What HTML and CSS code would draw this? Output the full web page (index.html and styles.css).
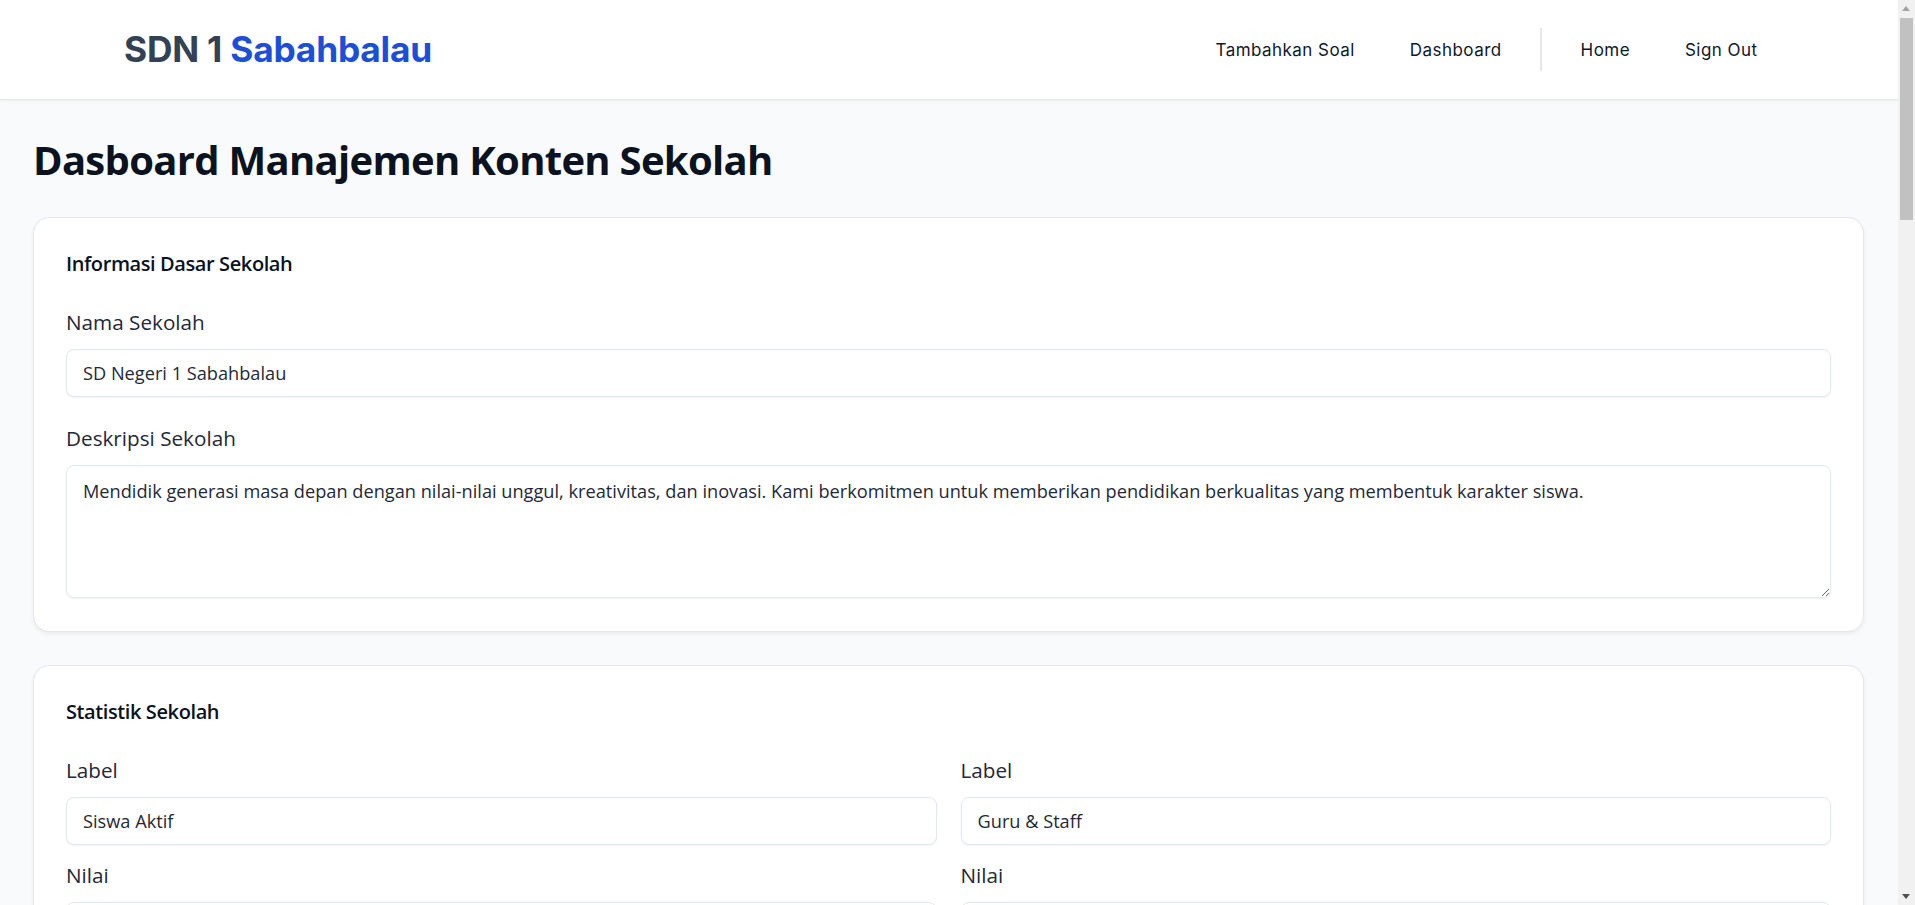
FILE: index.html
```html
<!DOCTYPE html>
<html lang="id">
<head>
<meta charset="utf-8">
<title>SDN 1 Sabahbalau - Dashboard</title>
<link rel="stylesheet" href="styles.css">
</head>
<body>
<header class="topbar">
  <div class="topbar-inner">
    <a class="brand" href="#"><span class="brand-dark">SDN 1</span> <span class="brand-blue">Sabahbalau</span></a>
    <nav class="nav">
      <a class="nav-link" href="#">Tambahkan Soal</a>
      <a class="nav-link" href="#">Dashboard</a>
      <span class="nav-divider"></span>
      <a class="nav-link" href="#">Home</a>
      <a class="nav-link" href="#">Sign Out</a>
    </nav>
  </div>
</header>

<main class="page">
  <h1 class="page-title">Dasboard Manajemen Konten Sekolah</h1>

  <section class="card">
    <h2 class="card-title">Informasi Dasar Sekolah</h2>
    <div class="field">
      <label class="field-label" for="nama">Nama Sekolah</label>
      <input class="input" id="nama" type="text" value="SD Negeri 1 Sabahbalau">
    </div>
    <div class="field">
      <label class="field-label" for="deskripsi">Deskripsi Sekolah</label>
      <textarea class="input textarea" id="deskripsi">Mendidik generasi masa depan dengan nilai-nilai unggul, kreativitas, dan inovasi. Kami berkomitmen untuk memberikan pendidikan berkualitas yang membentuk karakter siswa.</textarea>
    </div>
  </section>

  <section class="card">
    <h2 class="card-title">Statistik Sekolah</h2>
    <div class="stat-grid">
      <div class="stat-item">
        <label class="field-label">Label</label>
        <input class="input" type="text" value="Siswa Aktif">
        <label class="field-label">Nilai</label>
        <input class="input" type="text" value="500+">
      </div>
      <div class="stat-item">
        <label class="field-label">Label</label>
        <input class="input" type="text" value="Guru &amp; Staff">
        <label class="field-label">Nilai</label>
        <input class="input" type="text" value="35+">
      </div>
      <div class="stat-item">
        <label class="field-label">Label</label>
        <input class="input" type="text" value="Prestasi">
        <label class="field-label">Nilai</label>
        <input class="input" type="text" value="50+">
      </div>
      <div class="stat-item">
        <label class="field-label">Label</label>
        <input class="input" type="text" value="Ekstrakurikuler">
        <label class="field-label">Nilai</label>
        <input class="input" type="text" value="12">
      </div>
    </div>
  </section>
</main>

<div class="scrollbar" aria-hidden="true">
  <span class="scroll-arrow scroll-up"></span>
  <span class="scroll-thumb"></span>
  <span class="scroll-arrow scroll-down"></span>
</div>
</body>
</html>
```

FILE: styles.css
```css
* {
  box-sizing: border-box;
}

html, body {
  margin: 0;
  padding: 0;
}

body {
  background: #f8fafc;
  color: #1f2937;
  font-family: "Segoe UI", "Open Sans", "Noto Sans", sans-serif;
  padding-right: 17px;
}

/* ---------- header ---------- */
.topbar {
  background: #ffffff;
  border-bottom: 1px solid #e5e7eb;
  box-shadow: 0 1px 3px rgba(15, 23, 42, 0.06);
}

.topbar-inner {
  height: 99px;
  display: flex;
  align-items: center;
  justify-content: space-between;
  padding: 0 113px 0 124px;
}

.brand {
  text-decoration: none;
  font-family: "Inter", "Noto Sans", sans-serif;
  font-weight: 700;
  font-size: 35.3px;
  letter-spacing: -0.2px;
  line-height: 1;
}

.brand-dark {
  color: #334155;
}

.brand-blue {
  color: #1d4ed8;
}

.nav {
  display: flex;
  align-items: center;
}

.nav-link {
  font-family: "Inter", "Noto Sans", sans-serif;
  font-size: 17px;
  letter-spacing: 0.45px;
  color: #0f172a;
  text-decoration: none;
  padding: 8px 27.5px;
}

.nav-divider {
  width: 2px;
  height: 43px;
  background: #e5e7eb;
  margin: 0 11px;
}

/* ---------- page ---------- */
.page {
  padding: 36px 34px 40px 33px;
}

.page-title {
  margin: 0 0 33px;
  font-size: 40px;
  line-height: 48px;
  font-weight: 700;
  letter-spacing: -0.7px;
  color: #0b1220;
}

.card {
  background: #ffffff;
  border: 1px solid #e5e7eb;
  border-radius: 16px;
  box-shadow: 0 2px 4px rgba(15, 23, 42, 0.06);
  padding: 32px 32px 33px;
  margin-bottom: 33px;
}

.card-title {
  margin: 0 0 30px;
  font-size: 20px;
  line-height: 28px;
  font-weight: 600;
  letter-spacing: -0.4px;
  color: #0b1220;
}

.field {
  margin-bottom: 27px;
}

.field:last-child {
  margin-bottom: 0;
}

.field-label {
  display: block;
  font-size: 20.7px;
  line-height: 28px;
  color: #1f2937;
  margin-bottom: 13px;
}

.input {
  display: block;
  width: 100%;
  height: 48px;
  padding: 0 16px;
  border: 1px solid #e2e8f0;
  border-radius: 8px;
  background: #ffffff;
  box-shadow: 0 1px 2px rgba(15, 23, 42, 0.05);
  font-family: inherit;
  font-size: 18.2px;
  color: #1f2937;
  outline: none;
}

.textarea {
  height: 133px;
  padding: 11px 16px;
  line-height: 28px;
  resize: vertical;
}

.stat-grid {
  display: grid;
  grid-template-columns: 1fr 1fr;
  column-gap: 24px;
  row-gap: 32px;
}

.stat-item .input {
  margin-bottom: 16px;
}

.stat-item .input:last-child {
  margin-bottom: 0;
}

/* ---------- fake classic scrollbar ---------- */
.scrollbar {
  position: fixed;
  top: 0;
  right: 0;
  bottom: 0;
  width: 17px;
  background: #f1f1f1;
}

.scroll-thumb {
  position: absolute;
  top: 18px;
  left: 2px;
  right: 2px;
  height: 202px;
  background: #c1c1c1;
}

.scroll-arrow {
  position: absolute;
  left: 4px;
  width: 0;
  height: 0;
  border-left: 4.5px solid transparent;
  border-right: 4.5px solid transparent;
}

.scroll-up {
  top: 6px;
  border-bottom: 5px solid #a3a3a3;
}

.scroll-down {
  bottom: 6px;
  border-top: 5px solid #505050;
}
```
